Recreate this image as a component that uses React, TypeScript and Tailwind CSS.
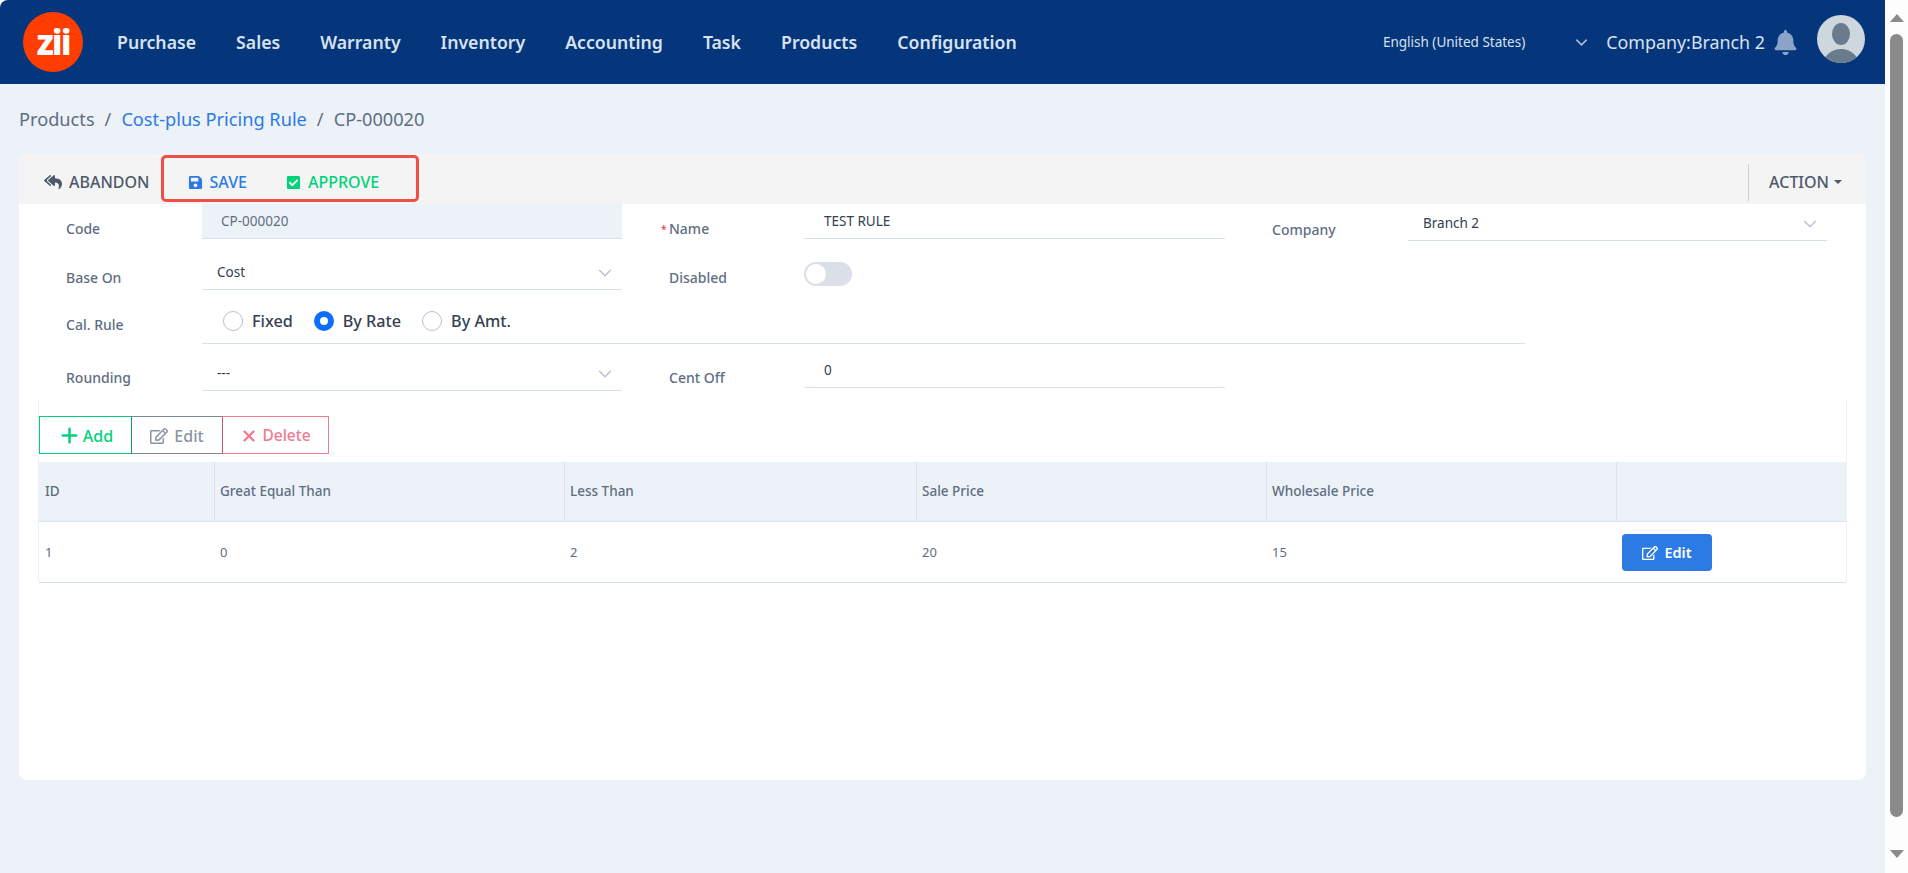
import React from "react";
import { ChevronDown, Plus, X } from "lucide-react";
import { FaBell, FaCheckSquare, FaRegEdit, FaReplyAll, FaSave } from "react-icons/fa";

const font = "font-['Noto_Sans',sans-serif]";

function Label({ children, req }: { children: React.ReactNode; req?: boolean }) {
  return (
    <div className="relative text-[14px] font-medium leading-none text-[#5e6e82]">
      {req && <span className="absolute left-[-8px] top-[2px] text-[10px] text-[#e63757]">*</span>}
      {children}
    </div>
  );
}

function Select({ value, w }: { value: string; w: string }) {
  return (
    <div className={`flex h-[34px] items-center justify-between border-b border-[#d8e2ef] pl-[15px] pr-[6px] text-[13.5px] text-[#344050] ${w}`}>
      <span>{value}</span>
      <ChevronDown size={22} strokeWidth={1.5} className="text-[#b6c1d2]" />
    </div>
  );
}

function Th({ children, w, last }: { children?: React.ReactNode; w: string; last?: boolean }) {
  return (
    <div className={`flex h-full items-center pl-[5px] text-[13.5px] font-medium text-[#5e6e82] ${w} ${last ? "" : "border-r border-[#d8e2ef]"}`}>
      {children}
    </div>
  );
}

function Td({ children, w }: { children?: React.ReactNode; w: string }) {
  return <div className={`flex h-full items-center pl-[5px] pt-[1px] text-[13px] text-[#5e6e82] ${w}`}>{children}</div>;
}

function Radio({ label, on }: { label: string; on?: boolean }) {
  return (
    <div className="flex items-center gap-[9px]">
      {on ? (
        <span className="flex h-[20px] w-[20px] items-center justify-center rounded-full bg-[#0d6efd]">
          <span className="h-[8px] w-[8px] rounded-full bg-white" />
        </span>
      ) : (
        <span className="h-[20px] w-[20px] rounded-full border border-[#b6c1d2] bg-white" />
      )}
      <span className="text-[16.2px] font-medium text-[#344050]">{label}</span>
    </div>
  );
}

export default function App() {
  return (
    <div className={`flex h-[873px] w-[1908px] overflow-hidden bg-[#fdfdfd] ${font}`}>
      <div className="flex h-full w-[1885px] flex-col rounded-tl-lg bg-[#edf2f9]">
        <header className="flex h-[84px] shrink-0 items-center rounded-tl-lg bg-[#05357a] pl-[23px] pr-[20px]">
          <div className="flex h-[60px] w-[60px] items-center justify-center rounded-full bg-[#ff3d00] pb-[2px] text-[35px] font-extrabold leading-none tracking-[-2px] text-white">
            zii
          </div>
          <nav className="ml-[34px] mt-[1px] flex gap-[40px] text-[17.7px] font-semibold text-[#d8e2ef]">
            <span>Purchase</span>
            <span>Sales</span>
            <span>Warranty</span>
            <span>Inventory</span>
            <span>Accounting</span>
            <span>Task</span>
            <span>Products</span>
            <span>Configuration</span>
          </nav>
          <div className="ml-auto flex items-center">
            <span className="text-[13.5px] text-[#d8e2ef]">English (United States)</span>
            <ChevronDown size={19} strokeWidth={1.8} className="ml-[47px] text-[#b6c1d2]" />
            <span className="ml-[15px] mt-[1px] text-[17.85px] text-[#d8e2ef]">Company:Branch 2</span>
            <FaBell size={25} className="ml-[8px] text-[#8ba3c7]" />
            <div className="mb-[7px] ml-[19px] h-[48px] w-[48px] overflow-hidden rounded-full bg-[#cdd7dd]">
              <svg viewBox="0 0 48 48" className="h-full w-full">
                <ellipse cx="24" cy="19" rx="9" ry="11" fill="#6a7b8b" />
                <ellipse cx="24" cy="50" rx="18" ry="16" fill="#6a7b8b" />
              </svg>
            </div>
          </div>
        </header>

        <div className="flex h-[70px] shrink-0 items-center gap-[10px] pl-[19px] pt-[2px] text-[18.2px] text-[#5e6e82]">
          <span>Products</span>
          <span>/</span>
          <span className="text-[#2c7be5]">Cost-plus Pricing Rule</span>
          <span>/</span>
          <span>CP-000020</span>
        </div>

        <main className="ml-[19px] h-[626px] w-[1847px] rounded-lg bg-white">
          <div className="relative flex h-[50px] items-center rounded-t-lg bg-[#f4f4f4] pl-[25px] pr-[24px] pt-[6px] text-[16px] font-medium">
            <div className="flex items-center gap-[7px] text-[#4d5969]">
              <FaReplyAll size={18} />
              <span>ABANDON</span>
            </div>
            <div className="ml-[38px] flex items-center gap-[7px] text-[#2c7be5]">
              <FaSave size={15} />
              <span>SAVE</span>
            </div>
            <div className="ml-[39px] flex items-center gap-[7px] text-[#00d27a]">
              <FaCheckSquare size={15} />
              <span>APPROVE</span>
            </div>
            <div className="ml-auto flex h-[37px] items-center gap-[5px] border-l border-[#c8d1de] pl-[20px] text-[#4d5969]">
              <span>ACTION</span>
              <span className="h-0 w-0 border-x-[4px] border-t-[4px] border-x-transparent border-t-[#4d5969]" />
            </div>
            <div className="absolute left-[142px] top-[1px] h-[47px] w-[258px] rounded-[5px] border-[3.5px] border-[#ef4f45]" />
          </div>

          <div className="flex h-[42px] items-start">
            <div className="w-[47px]" />
            <div className="flex w-[136px] pt-[18px]"><Label>Code</Label></div>
            <div className="flex h-[35px] w-[420px] items-center border-b border-[#d8e2ef] bg-[#edf2f9] pl-[19px] text-[13.5px] text-[#5e6e82]">CP-000020</div>
            <div className="w-[47px]" />
            <div className="flex w-[135px] pt-[18px]"><Label req>Name</Label></div>
            <div className="flex h-[35px] w-[421px] items-center border-b border-[#d8e2ef] pl-[20px] text-[13.5px] text-[#344050]">TEST RULE</div>
            <div className="w-[47px]" />
            <div className="flex w-[136px] pt-[19px]"><Label>Company</Label></div>
            <div className="pt-[3px]"><Select value="Branch 2" w="w-[419px]" /></div>
          </div>

          <div className="flex h-[44px] items-end">
            <div className="w-[47px]" />
            <div className="flex h-full w-[136px] items-end pb-[5px]"><Label>Base On</Label></div>
            <Select value="Cost" w="w-[420px]" />
            <div className="w-[47px]" />
            <div className="flex h-full w-[135px] items-end pb-[5px]"><Label>Disabled</Label></div>
            <div className="mb-[4px] flex h-[24px] w-[48px] items-center self-end rounded-full bg-[#dbe0e8] pl-[2px]">
              <span className="h-[20px] w-[20px] rounded-full bg-white" />
            </div>
          </div>

          <div className="flex h-[54px] items-end">
            <div className="w-[47px]" />
            <div className="flex h-full w-[136px] items-end pb-[12px]"><Label>Cal. Rule</Label></div>
            <div className="flex h-full w-[1323px] items-center gap-[21px] border-b border-[#d8e2ef] pl-[21px] pt-[9px]">
              <Radio label="Fixed" />
              <Radio label="By Rate" on />
              <Radio label="By Amt." />
            </div>
          </div>

          <div className="flex h-[47px] items-end">
            <div className="w-[47px]" />
            <div className="flex h-full w-[136px] items-end pb-[6px]"><Label>Rounding</Label></div>
            <Select value="---" w="w-[420px]" />
            <div className="w-[47px]" />
            <div className="flex h-full w-[135px] items-end pb-[6px]"><Label>Cent Off</Label></div>
            <div className="mb-[3px] flex h-[34px] w-[421px] items-center border-b border-[#d8e2ef] pl-[20px] text-[13.5px] text-[#344050]">0</div>
          </div>

          <div className="ml-[19px] mt-[8px] h-[183px] w-[1809px] border-x border-[#edf2f9]">
            <div className="flex h-[63px] items-start pt-[17px] text-[16px] font-medium">
              <div className="flex h-[38px] w-[92px] items-center justify-center gap-[2px] border-y border-l border-[#00d27a] pt-[1px] text-[#00d27a]">
                <Plus size={23} strokeWidth={2.6} />
                <span>Add</span>
              </div>
              <div className="flex h-[38px] w-[91px] items-center justify-center gap-[6px] border-y border-l border-y-[#7e8998] border-l-[#1e8f6f] pt-[1px] text-[#8a94a3]">
                <FaRegEdit size={18} />
                <span>Edit</span>
              </div>
              <div className="flex h-[38px] w-[107px] items-center justify-center gap-[4px] border border-y-[#f07a90] border-l-[#c9566f] border-r-[#f07a90] pt-[1px] text-[15.5px] text-[#f07a90]">
                <X size={18} strokeWidth={3} />
                <span>Delete</span>
              </div>
            </div>
            <div className="flex h-[60px] items-center border-b border-[#d8e2ef] bg-[#edf2f9]">
              <Th w="w-[176px] pl-[6px]">ID</Th>
              <Th w="w-[350px]">Great Equal Than</Th>
              <Th w="w-[352px]">Less Than</Th>
              <Th w="w-[350px]">Sale Price</Th>
              <Th w="w-[350px]">Wholesale Price</Th>
              <Th w="w-[229px]" last />
            </div>
            <div className="flex h-[61px] items-center border-b border-[#d8e2ef]">
              <Td w="w-[176px] pl-[6px]">1</Td>
              <Td w="w-[350px]">0</Td>
              <Td w="w-[352px]">2</Td>
              <Td w="w-[350px]">20</Td>
              <Td w="w-[350px]">15</Td>
              <Td w="w-[229px]">
                <div className="flex h-[37px] w-[90px] items-center justify-center gap-[6px] rounded-[4px] bg-[#2c7be5] text-[14.5px] font-semibold text-white">
                  <FaRegEdit size={16} />
                  <span>Edit</span>
                </div>
              </Td>
            </div>
          </div>
        </main>
      </div>

      <div className="flex h-full w-[23px] flex-col items-center rounded-r-lg bg-[#fdfdfd] pt-[14px]">
        <span className="h-0 w-0 border-x-[7px] border-b-[8px] border-x-transparent border-b-[#8a8a8a]" />
        <span className="mt-[12px] h-[783px] w-[13px] rounded-full bg-[#8a8a8a]" />
        <span className="mt-[33px] h-0 w-0 border-x-[7px] border-t-[8px] border-x-transparent border-t-[#8a8a8a]" />
      </div>
    </div>
  );
}
